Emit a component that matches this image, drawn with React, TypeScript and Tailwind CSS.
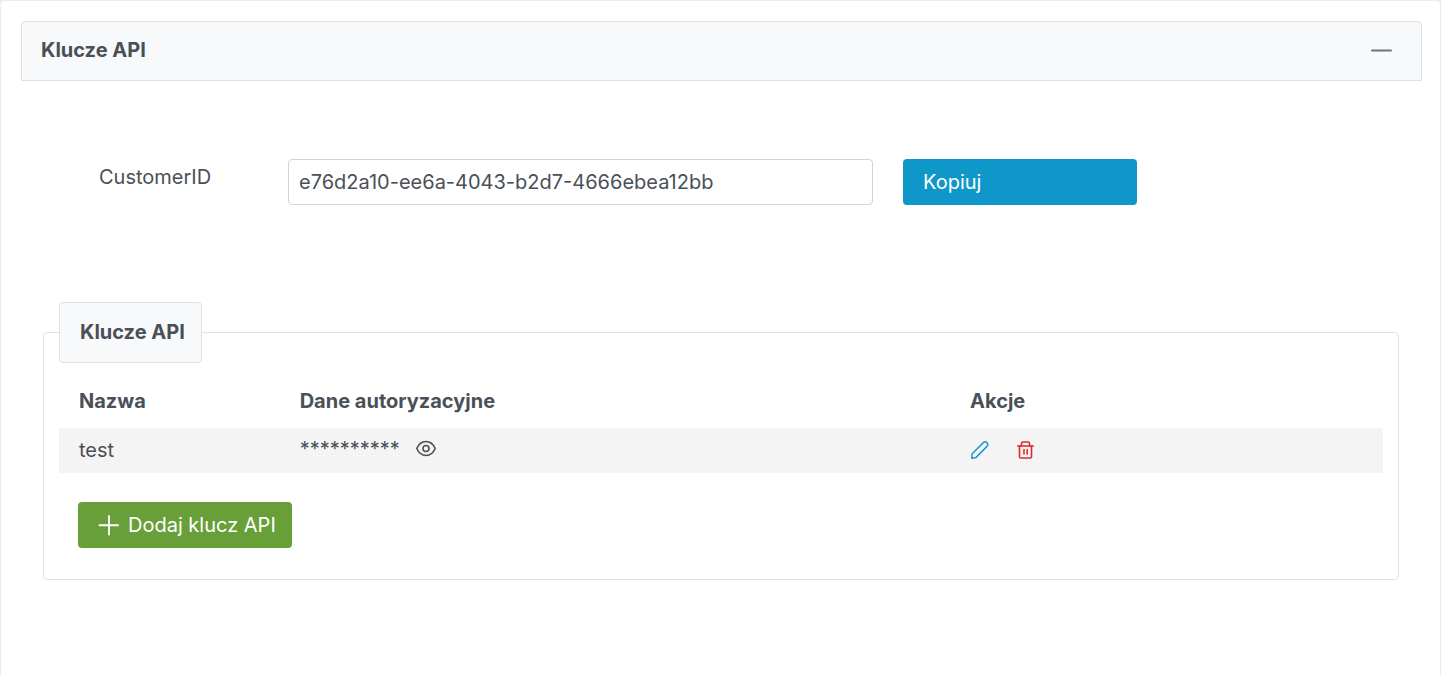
import { useState } from "react";

const CUSTOMER_ID = "e76d2a10-ee6a-4043-b2d7-4666ebea12bb";

const apiKeys = [{ name: "test", secret: "**********" }];

function MinusIcon() {
  return (
    <svg className="block h-5 w-[21px]" viewBox="0 0 21 20" fill="none" aria-hidden="true">
      <path d="M1 9.500H20" stroke="#6c757d" strokeWidth="2" strokeLinecap="round" />
    </svg>
  );
}

function EyeIcon() {
  return (
    <svg className="block size-5" viewBox="0 0 20 20" fill="none" stroke="currentColor" strokeWidth="1.600" aria-hidden="true">
      <path d="M0.800 9.500C2.600 5.300 6 2.500 10 2.500s7.400 2.800 9.200 7C17.400 13.700 14 16.500 10 16.500S2.600 13.700 0.800 9.500Z" strokeLinejoin="round" />
      <circle cx="10" cy="9.500" r="3" />
    </svg>
  );
}

function PencilIcon() {
  return (
    <svg className="block size-5" viewBox="0 0 20 20" fill="none" stroke="currentColor" strokeWidth="1.500" strokeLinejoin="round" aria-hidden="true">
      <path d="M1.700 18.200L2.200 13.700L13.300 2.600C14.400 1.600 15.800 1.600 16.900 2.600C18.100 3.800 18.100 5.300 17 6.400L6.100 17.400L1.700 18.200Z" />
    </svg>
  );
}

function TrashIcon() {
  return (
    <svg className="block size-5" viewBox="0 0 20 20" fill="none" stroke="currentColor" strokeWidth="1.600" strokeLinecap="round" strokeLinejoin="round" aria-hidden="true">
      <path d="M1.700 6H17.300" />
      <path d="M3.500 6V16.700Q3.500 18 5 18H14Q15.500 18 15.500 16.700V6" />
      <path d="M5.500 6V3.500Q5.500 2 7 2H12Q13.500 2 13.500 3.500V6" />
      <path d="M8 9.500V14M11.200 9.500V14" />
    </svg>
  );
}

function PlusIcon() {
  return (
    <svg className="block size-[21px]" viewBox="0 0 21 21" fill="none" stroke="currentColor" strokeWidth="1.900" strokeLinecap="round" aria-hidden="true">
      <path d="M11 1V19.500M1.500 10.200H20" />
    </svg>
  );
}

export default function App() {
  const [open, setOpen] = useState(true);

  return (
    <div className="min-h-screen bg-[#ececec] px-px pt-px font-['Inter',sans-serif] text-xl leading-6 text-[#495057]">
      <main className="min-h-[calc(100vh-1px)] rounded-t bg-white pt-5 pr-[18px] pl-5">
        <header className="flex h-[60px] items-center justify-between rounded-t border border-[#dee2e6] bg-[#f8f9fb] pr-[29px] pl-[19px]">
          <h1 className="pb-0.5 font-bold">Klucze API</h1>
          <button type="button" aria-label="Zwiń panel" aria-expanded={open} onClick={() => setOpen(!open)}>
            <MinusIcon />
          </button>
        </header>

        {open && (
          <div className="pt-[78px] pr-[23px] pb-24 pl-[22px]">
            <div className="grid grid-cols-[189fr_615fr_234fr_262fr] items-start pl-14">
              <label htmlFor="customer-id" className="pt-[6px]">CustomerID</label>
              <div className="pr-[30px]">
                <input
                  id="customer-id"
                  readOnly
                  value={CUSTOMER_ID}
                  className="block h-[46px] w-full rounded border border-[#ced4da] bg-white px-[10px]"
                />
              </div>
              <button
                type="button"
                onClick={() => navigator.clipboard?.writeText(CUSTOMER_ID)}
                className="h-[46px] rounded bg-[#1097c9] px-5 text-left text-white"
              >
                Kopiuj
              </button>
            </div>

            <fieldset className="mt-[97px] rounded border border-[#dee2e6] px-[15px] pb-[31px]">
              <legend className="rounded border border-[#dee2e6] bg-[#f8f9fb] py-[18px] pr-4 pl-5 leading-[23px] font-bold">
                Klucze API
              </legend>
              <table className="mt-4 w-full table-fixed text-left">
                <colgroup>
                  <col className="w-1/6" />
                  <col />
                  <col className="w-[32.7%]" />
                </colgroup>
                <thead>
                  <tr className="h-[49px]">
                    <th className="px-5 pb-1.5 font-bold">Nazwa</th>
                    <th className="px-5 pb-1.5 font-bold">Dane autoryzacyjne</th>
                    <th className="px-5 pb-1.5 font-bold">Akcje</th>
                  </tr>
                </thead>
                <tbody>
                  {apiKeys.map((key) => (
                    <tr key={key.name} className="h-[45px] bg-[#f4f4f4]">
                      <td className="px-5 pb-0.5">{key.name}</td>
                      <td className="px-5 pb-0.5">
                        <div className="flex items-center gap-4 pb-0.5">
                          <span>{key.secret}</span>
                          <button type="button" aria-label="Pokaż dane">
                            <EyeIcon />
                          </button>
                        </div>
                      </td>
                      <td className="px-5 pb-0.5">
                        <div className="flex items-center gap-[26px]">
                          <button type="button" aria-label="Edytuj" className="text-[#2196d3]">
                            <PencilIcon />
                          </button>
                          <button type="button" aria-label="Usuń" className="text-[#dc2b2b]">
                            <TrashIcon />
                          </button>
                        </div>
                      </td>
                    </tr>
                  ))}
                </tbody>
              </table>
              <button
                type="button"
                className="mt-[29px] ml-[19px] flex h-[46px] items-center gap-[9px] rounded bg-[#689f38] pr-4 pl-5 text-white"
              >
                <PlusIcon />
                Dodaj klucz API
              </button>
            </fieldset>
          </div>
        )}
      </main>
    </div>
  );
}
